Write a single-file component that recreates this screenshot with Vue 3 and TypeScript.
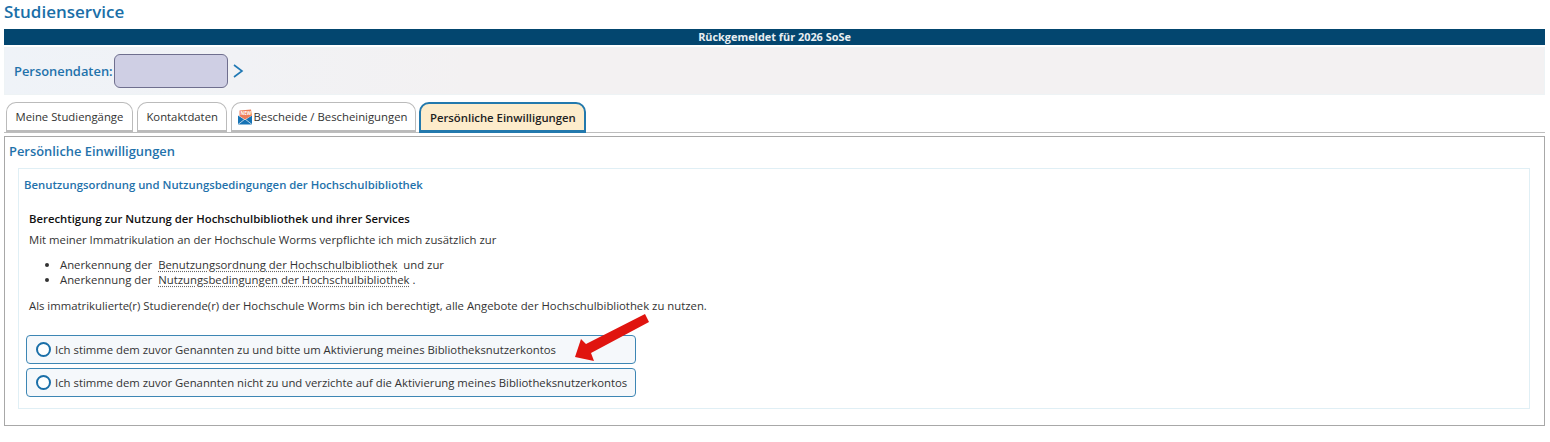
<script setup lang="ts">
const tabs: string[] = ['Meine Studiengänge', 'Kontaktdaten']
const options: string[] = [
  'Ich stimme dem zuvor Genannten zu und bitte um Aktivierung meines Bibliotheksnutzerkontos',
  'Ich stimme dem zuvor Genannten nicht zu und verzichte auf die Aktivierung meines Bibliotheksnutzerkontos',
]
</script>

<template>
  <div class="page">
    <h1 class="title">Studienservice</h1>
    <div class="status">Rückgemeldet für 2026 SoSe</div>
    <div class="person">
      <span class="person-label">Personendaten:</span>
      <div class="person-box"></div>
      <svg class="chev" width="12" height="16" viewBox="0 0 12 16">
        <path d="M2 2l8 6-8 6" fill="none" stroke="#1f78b4" stroke-width="1.6" />
      </svg>
    </div>
    <div class="tabs">
      <div v-for="t in tabs" :key="t" class="tab">{{ t }}</div>
      <div class="tab tab-icon">
        <svg width="16" height="16" viewBox="0 0 16 16">
          <path d="M1 6.500l7 4.500 7-4.500V15.500H1z" fill="#1673b5" />
          <path d="M1 15.500l7-5.500 7 5.500" fill="none" stroke="#dfeaf3" stroke-width=".8" />
          <path d="M2.500 1.500L14 .5l1 6-7 4-5.500-3.500z" fill="#ee7f5a" />
          <text x="3.500" y="6" class="new">NEW</text>
        </svg>
        <span>Bescheide / Bescheinigungen</span>
      </div>
      <div class="tab tab-active">Persönliche Einwilligungen</div>
    </div>
    <div class="content">
      <h2 class="content-title">Persönliche Einwilligungen</h2>
      <div class="card">
        <h3 class="card-title">Benutzungsordnung und Nutzungsbedingungen der Hochschulbibliothek</h3>
        <p class="lead">Berechtigung zur Nutzung der Hochschulbibliothek und ihrer Services</p>
        <p class="intro">Mit meiner Immatrikulation an der Hochschule Worms verpflichte ich mich zusätzlich zur</p>
        <ul class="list">
          <li>Anerkennung der <a class="link">Benutzungsordnung der Hochschulbibliothek</a> und zur</li>
          <li>Anerkennung der <a class="link">Nutzungsbedingungen der Hochschulbibliothek</a>.</li>
        </ul>
        <p class="note">Als immatrikulierte(r) Studierende(r) der Hochschule Worms bin ich berechtigt, alle Angebote der Hochschulbibliothek zu nutzen.</p>
        <div class="options">
          <label v-for="o in options" :key="o" class="option">
            <span class="radio"></span>
            <span>{{ o }}</span>
          </label>
          <svg class="arrow" width="80" height="54" viewBox="0 0 80 54">
            <path d="M4 47L10 29L15 34L74 4L78 12L20 43L23 51z" fill="#e0140f" />
          </svg>
        </div>
      </div>
    </div>
  </div>
</template>

<style>
html, body { margin: 0; background: #fff; }
</style>

<style scoped>
.page {
  box-sizing: border-box;
  width: 1550px;
  height: 442px;
  padding: 0 5px 0 4px;
  font-family: "Open Sans", "Noto Sans", sans-serif;
  font-size: 11.33px;
  color: #333;
  overflow: hidden;
}
.title {
  margin: 0;
  height: 29px;
  font-size: 17px;
  line-height: 24px;
  font-weight: 600;
  color: #1a6fa8;
}
.status {
  height: 16px;
  line-height: 16px;
  background: #03466f;
  color: #e8eef2;
  font-size: 10.900px;
  font-weight: 700;
  text-align: center;
}
.person {
  display: flex;
  align-items: center;
  box-sizing: border-box;
  height: 48px;
  margin-top: 2px;
  padding-left: 9px;
  background: linear-gradient(90deg, #eff3f8, #f3f1f2 30%);
  border: 1px solid #eef3f5;
}
.person-label {
  font-size: 12.900px;
  font-weight: 600;
  color: #1f72ab;
}
.person-box {
  box-sizing: border-box;
  width: 114px;
  height: 34px;
  margin-left: 1px;
  background: #cfcfe4;
  border: 1px solid #6f6f8e;
  border-radius: 6px;
}
.chev { margin-left: 4px; }
.tabs {
  display: flex;
  align-items: flex-end;
  gap: 4px;
  height: 38px;
  padding-left: 2px;
  border-bottom: 1px solid #bdbdbd;
  box-sizing: border-box;
}
.tab {
  box-sizing: border-box;
  display: flex;
  align-items: center;
  height: 30px;
  padding: 0 8.500px;
  font-size: 11.33px;
  color: #333;
  border: 1px solid #bbb;
  border-bottom-width: 2px;
  border-radius: 10px 10px 0 0;
  background: #fff;
}
.tab-icon { padding: 0 8px 0 5px; margin-right: -1px; }
.new {
  font-size: 4.500px;
  font-weight: 700;
  fill: #fff;
  font-family: "Open Sans", sans-serif;
}
.tab-active {
  height: 31px;
  margin-bottom: -1px;
  background: #fdeccb;
  border: 2px solid #2379ad;
  border-bottom-width: 3px;
  font-weight: 600;
  color: #222;
}
.content {
  box-sizing: border-box;
  height: 290px;
  margin-top: 3px;
  padding: 5px 14px 0 4px;
  border: 1px solid #a8a8a8;
}
.content-title {
  margin: 0;
  height: 26px;
  font-size: 12.900px;
  line-height: 18px;
  font-weight: 600;
  color: #1f72ab;
}
.card {
  box-sizing: border-box;
  height: 241px;
  margin-left: 9px;
  padding: 8px 6px 0 5px;
  border: 1px solid #e0eff5;
}
.card-title {
  margin: 0;
  font-size: 11.33px;
  line-height: 16px;
  font-weight: 600;
  color: #1f72ab;
}
.lead, .intro, .note {
  margin: 0 0 0 5px;
  font-size: 11.33px;
  line-height: 16px;
}
.lead { margin-top: 18px; font-weight: 600; color: #111; }
.intro { margin-top: 5px; }
.list {
  margin: 9px 0 0 4px;
  padding: 0 0 0 32px;
  font-size: 11.33px;
  line-height: 15px;
}
.link {
  margin: 0 3px;
  text-decoration: underline dotted #666;
  text-underline-offset: 2px;
}
.note { margin-top: 11px; }
.options {
  position: relative;
  display: flex;
  flex-direction: column;
  gap: 4px;
  margin: 21px 0 0 2px;
  width: 610px;
}
.option {
  box-sizing: border-box;
  display: flex;
  align-items: center;
  height: 29px;
  padding-left: 9px;
  gap: 4px;
  font-size: 11.33px;
  background: #f5f8fb;
  border: 1px solid #3d86b4;
  border-radius: 4px;
}
.radio {
  box-sizing: border-box;
  width: 15px;
  height: 15px;
  background: #fff;
  border: 2px solid #1a6fa8;
  border-radius: 50%;
}
.arrow {
  position: absolute;
  left: 545px;
  top: -25px;
}
</style>
